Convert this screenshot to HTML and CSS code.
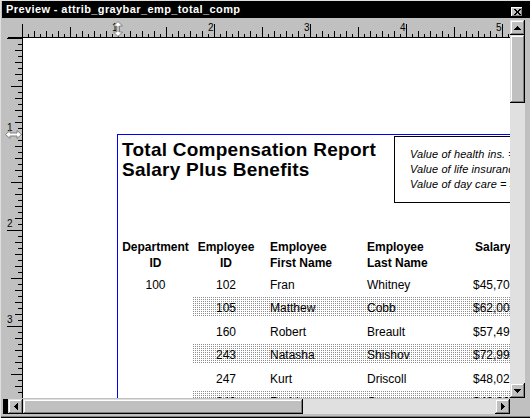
FILE: index.html
```html
<!DOCTYPE html>
<html>
<head>
<meta charset="utf-8">
<title>Preview</title>
<link rel="stylesheet" href="styles.css">
</head>
<body>
<div class="window">
  <div class="titlebar">
    <span class="title">Preview - attrib_graybar_emp_total_comp</span>
    <span class="close">
      <svg width="7" height="6" viewBox="0 0 7 6" shape-rendering="crispEdges"><path d="M0 0h2v1h-2zM5 0h2v1h-2zM1 1h2v1h-2zM4 1h2v1h-2zM2 2h3v2h-3zM1 4h2v1h-2zM4 4h2v1h-2zM0 5h2v1h-2zM5 5h2v1h-2z" fill="#000"/></svg>
    </span>
  </div>
  <div class="client">
    <div class="main">
      <div class="hruler">
        <div class="hticks">
          <span class="hn hn1">1</span>
          <span class="hn hn2">2</span>
          <span class="hn hn3">3</span>
          <span class="hn hn4">4</span>
          <span class="hn hn5">5</span>
          <svg class="vcursor" width="10" height="16" viewBox="0 0 10 16"><polygon points="5,0.5 9.5,5 6.5,5 6.5,11 9.5,11 5,15.5 0.5,11 3.5,11 3.5,5 0.5,5" fill="#fff" stroke="#808080" stroke-width="1"/><line x1="5" y1="5" x2="5" y2="11" stroke="#808080" stroke-width="1"/></svg>
        </div>
      </div>
      <div class="mid">
        <div class="vruler">
          <span class="vn vn1">1</span>
          <span class="vn vn2">2</span>
          <span class="vn vn3">3</span>
          <svg class="hcursor" width="17" height="9" viewBox="0 0 17 9"><polygon points="0.5,4.5 5,0.5 5,3 12,3 12,0.5 16.5,4.5 12,8.5 12,6 5,6 5,8.5" fill="#fff" stroke="#808080" stroke-width="1"/></svg>
        </div>
        <div class="page">
          <div class="report">
            <div class="rhead">
              <div class="rtitle">Total Compensation Report<br>Salary Plus Benefits</div>
              <div class="note">
                <div>Value of health ins. = $300.00</div>
                <div>Value of life insurance = $100.00</div>
                <div>Value of day care = $100.00</div>
              </div>
            </div>
            <div class="cols hdr">
              <span class="c1">Department<br>ID</span>
              <span class="c2">Employee<br>ID</span>
              <span class="c3">Employee<br>First Name</span>
              <span class="c4">Employee<br>Last Name</span>
              <span class="c5">Salary</span>
            </div>
            <div class="rows">
              <div class="cols row"><span class="c1">100</span><span class="c2">102</span><span class="c3">Fran</span><span class="c4">Whitney</span><span class="c5">$45,700.00</span></div>
              <div class="cols row gray"><svg class="band" width="100%" height="20"><defs><pattern id="dots" width="2" height="2" patternUnits="userSpaceOnUse"><rect width="2" height="2" fill="#fff"/><rect width="1" height="1" fill="#8c8c8c"/></pattern></defs><rect width="100%" height="20" fill="url(#dots)" shape-rendering="crispEdges"/></svg><span class="c1"></span><span class="c2">105</span><span class="c3">Matthew</span><span class="c4">Cobb</span><span class="c5">$62,000.00</span></div>
              <div class="cols row"><span class="c1"></span><span class="c2">160</span><span class="c3">Robert</span><span class="c4">Breault</span><span class="c5">$57,490.00</span></div>
              <div class="cols row gray"><svg class="band" width="100%" height="20"><rect width="100%" height="20" fill="url(#dots)" shape-rendering="crispEdges"/></svg><span class="c1"></span><span class="c2">243</span><span class="c3">Natasha</span><span class="c4">Shishov</span><span class="c5">$72,995.00</span></div>
              <div class="cols row"><span class="c1"></span><span class="c2">247</span><span class="c3">Kurt</span><span class="c4">Driscoll</span><span class="c5">$48,023.69</span></div>
              <div class="cols row gray"><svg class="band" width="100%" height="20"><rect width="100%" height="20" fill="url(#dots)" shape-rendering="crispEdges"/></svg><span class="c1"></span><span class="c2">249</span><span class="c3">Rodrigo</span><span class="c4">Guevara</span><span class="c5">$42,998.00</span></div>
            </div>
          </div>
        </div>
      </div>
      <div class="hscroll">
        <span class="splitter"></span>
        <span class="btn hbtn"><svg width="4" height="7" viewBox="0 0 4 7" shape-rendering="crispEdges"><path d="M3 0h1v7h-1zM2 1h1v5h-1zM1 2h1v3h-1zM0 3h1v1h-1z" fill="#000"/></svg></span>
        <span class="btn hthumb"></span>
        <span class="htrack"></span>
        <span class="btn hbtn"><svg width="4" height="7" viewBox="0 0 4 7" shape-rendering="crispEdges"><path d="M0 0h1v7h-1zM1 1h1v5h-1zM2 2h1v3h-1zM3 3h1v1h-1z" fill="#000"/></svg></span>
      </div>
    </div>
    <div class="vcol">
      <div class="vscroll">
        <span class="btn vbtn"><svg width="7" height="4" viewBox="0 0 7 4" shape-rendering="crispEdges"><path d="M3 0h1v1h-1zM2 1h3v1h-3zM1 2h5v1h-5zM0 3h7v1h-7z" fill="#000"/></svg></span>
        <span class="btn vthumb"></span>
        <span class="vtrack"></span>
        <span class="btn vbtn"><svg width="7" height="4" viewBox="0 0 7 4" shape-rendering="crispEdges"><path d="M0 0h7v1h-7zM1 1h5v1h-5zM2 2h3v1h-3zM3 3h1v1h-1z" fill="#000"/></svg></span>
      </div>
      <div class="corner"></div>
    </div>
  </div>
  <div class="bottom"></div>
</div>
</body>
</html>
```

FILE: styles.css
```css
html, body {
  margin: 0;
  padding: 0;
  background: #c0c0c0;
}

body {
  font-family: "Liberation Sans", Arial, sans-serif;
  color: #000;
}

.window {
  width: 530px;
  height: 418px;
  box-sizing: border-box;
  background: #c0c0c0;
  border-top: 1px solid #dfdfdf;
  border-left: 1px solid #dfdfdf;
  display: flex;
  flex-direction: column;
  overflow: hidden;
}

/* ---------- title bar ---------- */
.titlebar {
  height: 17px;
  margin-left: 1px;
  background: #000;
  display: flex;
  align-items: flex-start;
  padding-left: 4px;
  flex: none;
}

.title {
  margin-top: 2px;
  color: #fff;
  font-weight: bold;
  font-size: 11px;
  line-height: 12px;
  letter-spacing: 0.4px;
  white-space: nowrap;
}

.close {
  margin-left: auto;
  margin-right: 7px;
  margin-top: 6px;
  width: 12px;
  height: 10px;
  box-sizing: border-box;
  background: #c0c0c0;
  box-shadow: inset -1px -1px #000, inset 1px 1px #fff, inset -2px -2px #808080;
  display: flex;
  align-items: center;
  justify-content: center;
  padding-bottom: 1px;
}

.close svg {
  display: block;
}

/* ---------- client ---------- */
.client {
  height: 396px;
  display: flex;
  flex: none;
}

.main {
  width: 509px;
  display: flex;
  flex-direction: column;
}

/* horizontal ruler */
.hruler {
  height: 20px;
  box-sizing: border-box;
  padding-left: 21px;
  display: flex;
  background: linear-gradient(#000, #000) 7px 19px / 502px 1px no-repeat;
  flex: none;
}

.hticks {
  flex: 1;
  height: 19px;
  position: relative;
  background:
    repeating-linear-gradient(90deg, #000 0 1px, transparent 1px 96px) left bottom / 100% 13px no-repeat,
    repeating-linear-gradient(90deg, #000 0 1px, transparent 1px 48px) left bottom / 100% 10px no-repeat,
    repeating-linear-gradient(90deg, #000 0 1px, transparent 1px 12px) left bottom / 100% 6px no-repeat,
    repeating-linear-gradient(90deg, #000 0 1px, transparent 1px 6px) left bottom / 100% 3px no-repeat;
}

.hn {
  position: absolute;
  top: 5px;
  font-size: 10px;
  line-height: 10px;
}

.hn1 { left: 90px; }
.hn2 { left: 186px; }
.hn3 { left: 282px; }
.hn4 { left: 378px; }
.hn5 { left: 474px; }

.vcursor {
  position: absolute;
  left: 91px;
  top: 3px;
  display: block;
}

/* middle */
.mid {
  height: 360px;
  display: flex;
  flex: none;
}

.vruler {
  width: 22px;
  box-sizing: border-box;
  border-right: 1px solid #000;
  position: relative;
  flex: none;
  background:
    repeating-linear-gradient(180deg, #000 0 1px, transparent 1px 96px) right top / 15px 100% no-repeat,
    repeating-linear-gradient(180deg, #000 0 1px, transparent 1px 48px) right top / 11px 100% no-repeat,
    repeating-linear-gradient(180deg, #000 0 1px, transparent 1px 12px) right top / 7px 100% no-repeat,
    repeating-linear-gradient(180deg, #000 0 1px, transparent 1px 6px) right top / 4px 100% no-repeat;
}

.vn {
  position: absolute;
  left: 6px;
  font-size: 10px;
  line-height: 10px;
}

.vn1 { top: 85px; }
.vn2 { top: 181px; }
.vn3 { top: 277px; }

.hcursor {
  position: absolute;
  left: 4px;
  top: 92px;
  display: block;
}

.page {
  flex: 1;
  background: #fff;
  overflow: hidden;
}

/* ---------- report ---------- */
.report {
  margin-left: 94px;
  margin-top: 96px;
  width: 600px;
  min-height: 420px;
  border-top: 1px solid #0000ff;
  border-left: 1px solid #0000ff;
}

.rhead {
  height: 104px;
  display: grid;
  grid-template-columns: 276px 180px;
  align-items: start;
}

.rtitle {
  margin-top: 5px;
  padding-left: 4px;
  font-size: 19px;
  line-height: 20px;
  letter-spacing: 0.25px;
  font-weight: bold;
  white-space: nowrap;
}

.note {
  margin-top: 1px;
  height: 67px;
  box-sizing: border-box;
  border: 1px solid #000;
  padding: 10px 0 0 15px;
  font-size: 11px;
  line-height: 15px;
  letter-spacing: 0.1px;
  font-style: italic;
  white-space: nowrap;
}

.cols {
  display: grid;
  grid-template-columns: 75px 66px 108px 106px 140px;
  white-space: nowrap;
}

.c1, .c2 { text-align: center; }
.c3 { padding-left: 11px; }

.c1 { grid-column: 1; }
.c2 { grid-column: 2; }
.c3 { grid-column: 3; }
.c4 { grid-column: 4; }
.c5 { grid-column: 5; }

.hdr {
  height: 32px;
  margin-bottom: 3px;
  font-size: 12px;
  line-height: 16px;
  font-weight: bold;
}

.hdr .c5 { padding-left: 2px; }

.row {
  height: 20px;
  margin-bottom: 3px;
  font-size: 12px;
  line-height: 22px;
}

.row > span {
  grid-row: 1;
}

.row:nth-child(even) {
  margin-bottom: 4px;
}

.band {
  grid-column: 2 / 6;
  grid-row: 1;
  display: block;
  width: 100%;
  height: 20px;
}

/* ---------- scrollbars ---------- */
.btn {
  background: #c0c0c0;
  box-shadow: inset -1px -1px #000, inset 1px 1px #dfdfdf, inset -2px -2px #808080, inset 2px 2px #fff;
  display: flex;
  align-items: center;
  justify-content: center;
  box-sizing: border-box;
  flex: none;
}

.btn svg {
  display: block;
}

.hscroll {
  height: 16px;
  box-sizing: border-box;
  padding-top: 1px;
  padding-left: 2px;
  display: flex;
  flex: none;
}

.splitter {
  width: 5px;
  background: #000;
  flex: none;
}

.hbtn {
  width: 15px;
}

.hthumb {
  width: 280px;
}

.htrack {
  flex: 1;
  background: #e0e0e0;
}

.vcol {
  width: 16px;
  display: flex;
  flex-direction: column;
  padding-top: 2px;
  box-sizing: border-box;
}

.vscroll {
  width: 15px;
  height: 378px;
  display: flex;
  flex-direction: column;
  flex: none;
}

.vbtn {
  height: 15px;
}

.vthumb {
  height: 68px;
}

.vtrack {
  flex: 1;
  background: #e0e0e0;
}

.corner {
  flex: 1;
  background: #c0c0c0;
}

.bottom {
  height: 4px;
  flex: none;
  box-shadow: inset 0 -1px #000, inset 0 -2px #808080;
}
```
